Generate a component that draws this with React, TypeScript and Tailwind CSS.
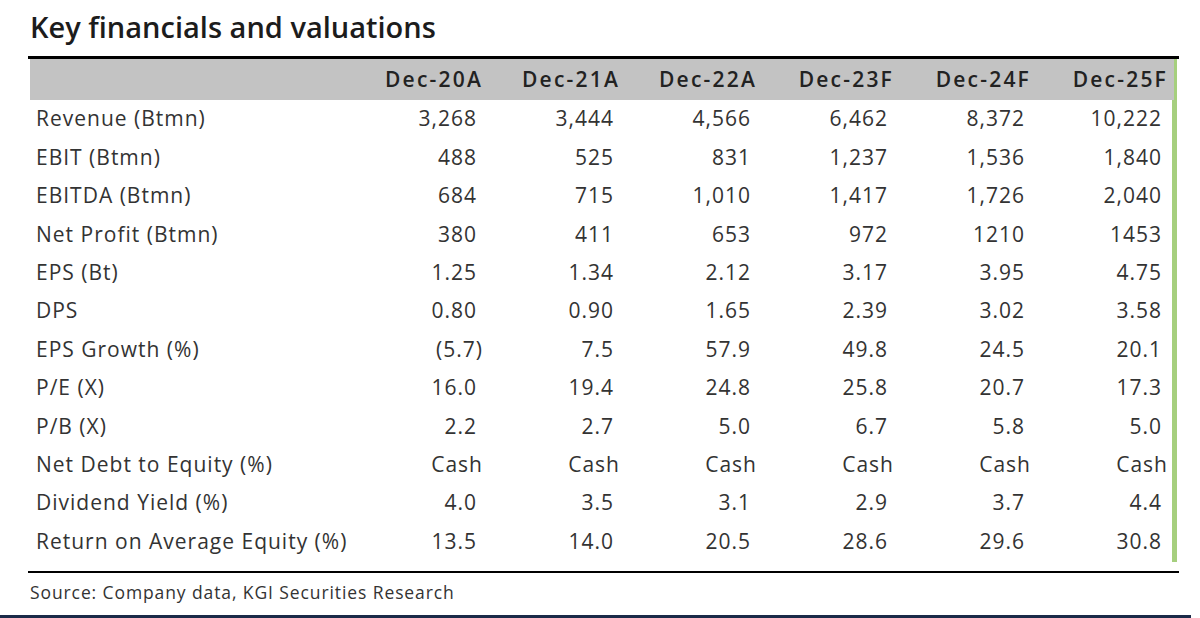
const years = ['Dec-20A', 'Dec-21A', 'Dec-22A', 'Dec-23F', 'Dec-24F', 'Dec-25F'];

const rows: [string, string[]][] = [
  ['Revenue (Btmn)', ['3,268', '3,444', '4,566', '6,462', '8,372', '10,222']],
  ['EBIT (Btmn)', ['488', '525', '831', '1,237', '1,536', '1,840']],
  ['EBITDA (Btmn)', ['684', '715', '1,010', '1,417', '1,726', '2,040']],
  ['Net Profit (Btmn)', ['380', '411', '653', '972', '1210', '1453']],
  ['EPS (Bt)', ['1.25', '1.34', '2.12', '3.17', '3.95', '4.75']],
  ['DPS', ['0.80', '0.90', '1.65', '2.39', '3.02', '3.58']],
  ['EPS Growth (%)', ['(5.7)', '7.5', '57.9', '49.8', '24.5', '20.1']],
  ['P/E (X)', ['16.0', '19.4', '24.8', '25.8', '20.7', '17.3']],
  ['P/B (X)', ['2.2', '2.7', '5.0', '6.7', '5.8', '5.0']],
  ['Net Debt to Equity (%)', ['Cash', 'Cash', 'Cash', 'Cash', 'Cash', 'Cash']],
  ['Dividend Yield (%)', ['4.0', '3.5', '3.1', '2.9', '3.7', '4.4']],
  ['Return on Average Equity (%)', ['13.5', '14.0', '20.5', '28.6', '29.6', '30.8']],
];

function Cell({ v }: { v: string }) {
  // numbers leave room for a closing paren, like the source sheet
  const flush = v === 'Cash' || v.endsWith(')');
  return (
    <div className={`w-[137px] text-right ${flush ? 'pr-0' : 'pr-[6px]'}`}>{v}</div>
  );
}

export default function App() {
  return (
    <div className="relative w-[1200px] h-[618px] bg-white overflow-hidden font-['Open_Sans',sans-serif] text-[#333]">
      <h1 className="pl-[30px] pt-[8px] h-[56px] text-[29px] leading-[38px] font-semibold text-[#1c1c1c]">
        Key financials and valuations
      </h1>

      <div className="ml-[28px] w-[1151px] border-t-[3px] border-black">
        <div className="ml-[2px] w-[1147px] border-r-[5px] border-[#a6cf7e]">
          <div className="flex items-center h-[41px] bg-[#c3c3c3] text-[21px] font-semibold text-[#222] tracking-[2.2px] -mr-[2px]">
            <div className="w-[316px]" />
            {years.map((y) => (
              <div key={y} className="w-[137px] text-right">{y}</div>
            ))}
          </div>
          <div className="tracking-[1px] -mr-[1px] pb-[1px]">
            {rows.map(([label, vals]) => (
              <div key={label} className="flex items-center h-[38.4px] text-[21px]">
                <div className="w-[316px] pl-[6px] whitespace-nowrap">{label}</div>
                {vals.map((v, i) => (
                  <Cell key={i} v={v} />
                ))}
              </div>
            ))}
          </div>
        </div>
        <div className="mt-[9px] border-t-[2px] border-black" />
        <div className="pl-[2px] pt-[6px] text-[17.5px] tracking-[0.9px] text-[#333]">
          Source: Company data, KGI Securities Research
        </div>
      </div>

      <div className="absolute left-0 bottom-0 w-[1191px] h-[3px] bg-[#1b2a48]" />
    </div>
  );
}
